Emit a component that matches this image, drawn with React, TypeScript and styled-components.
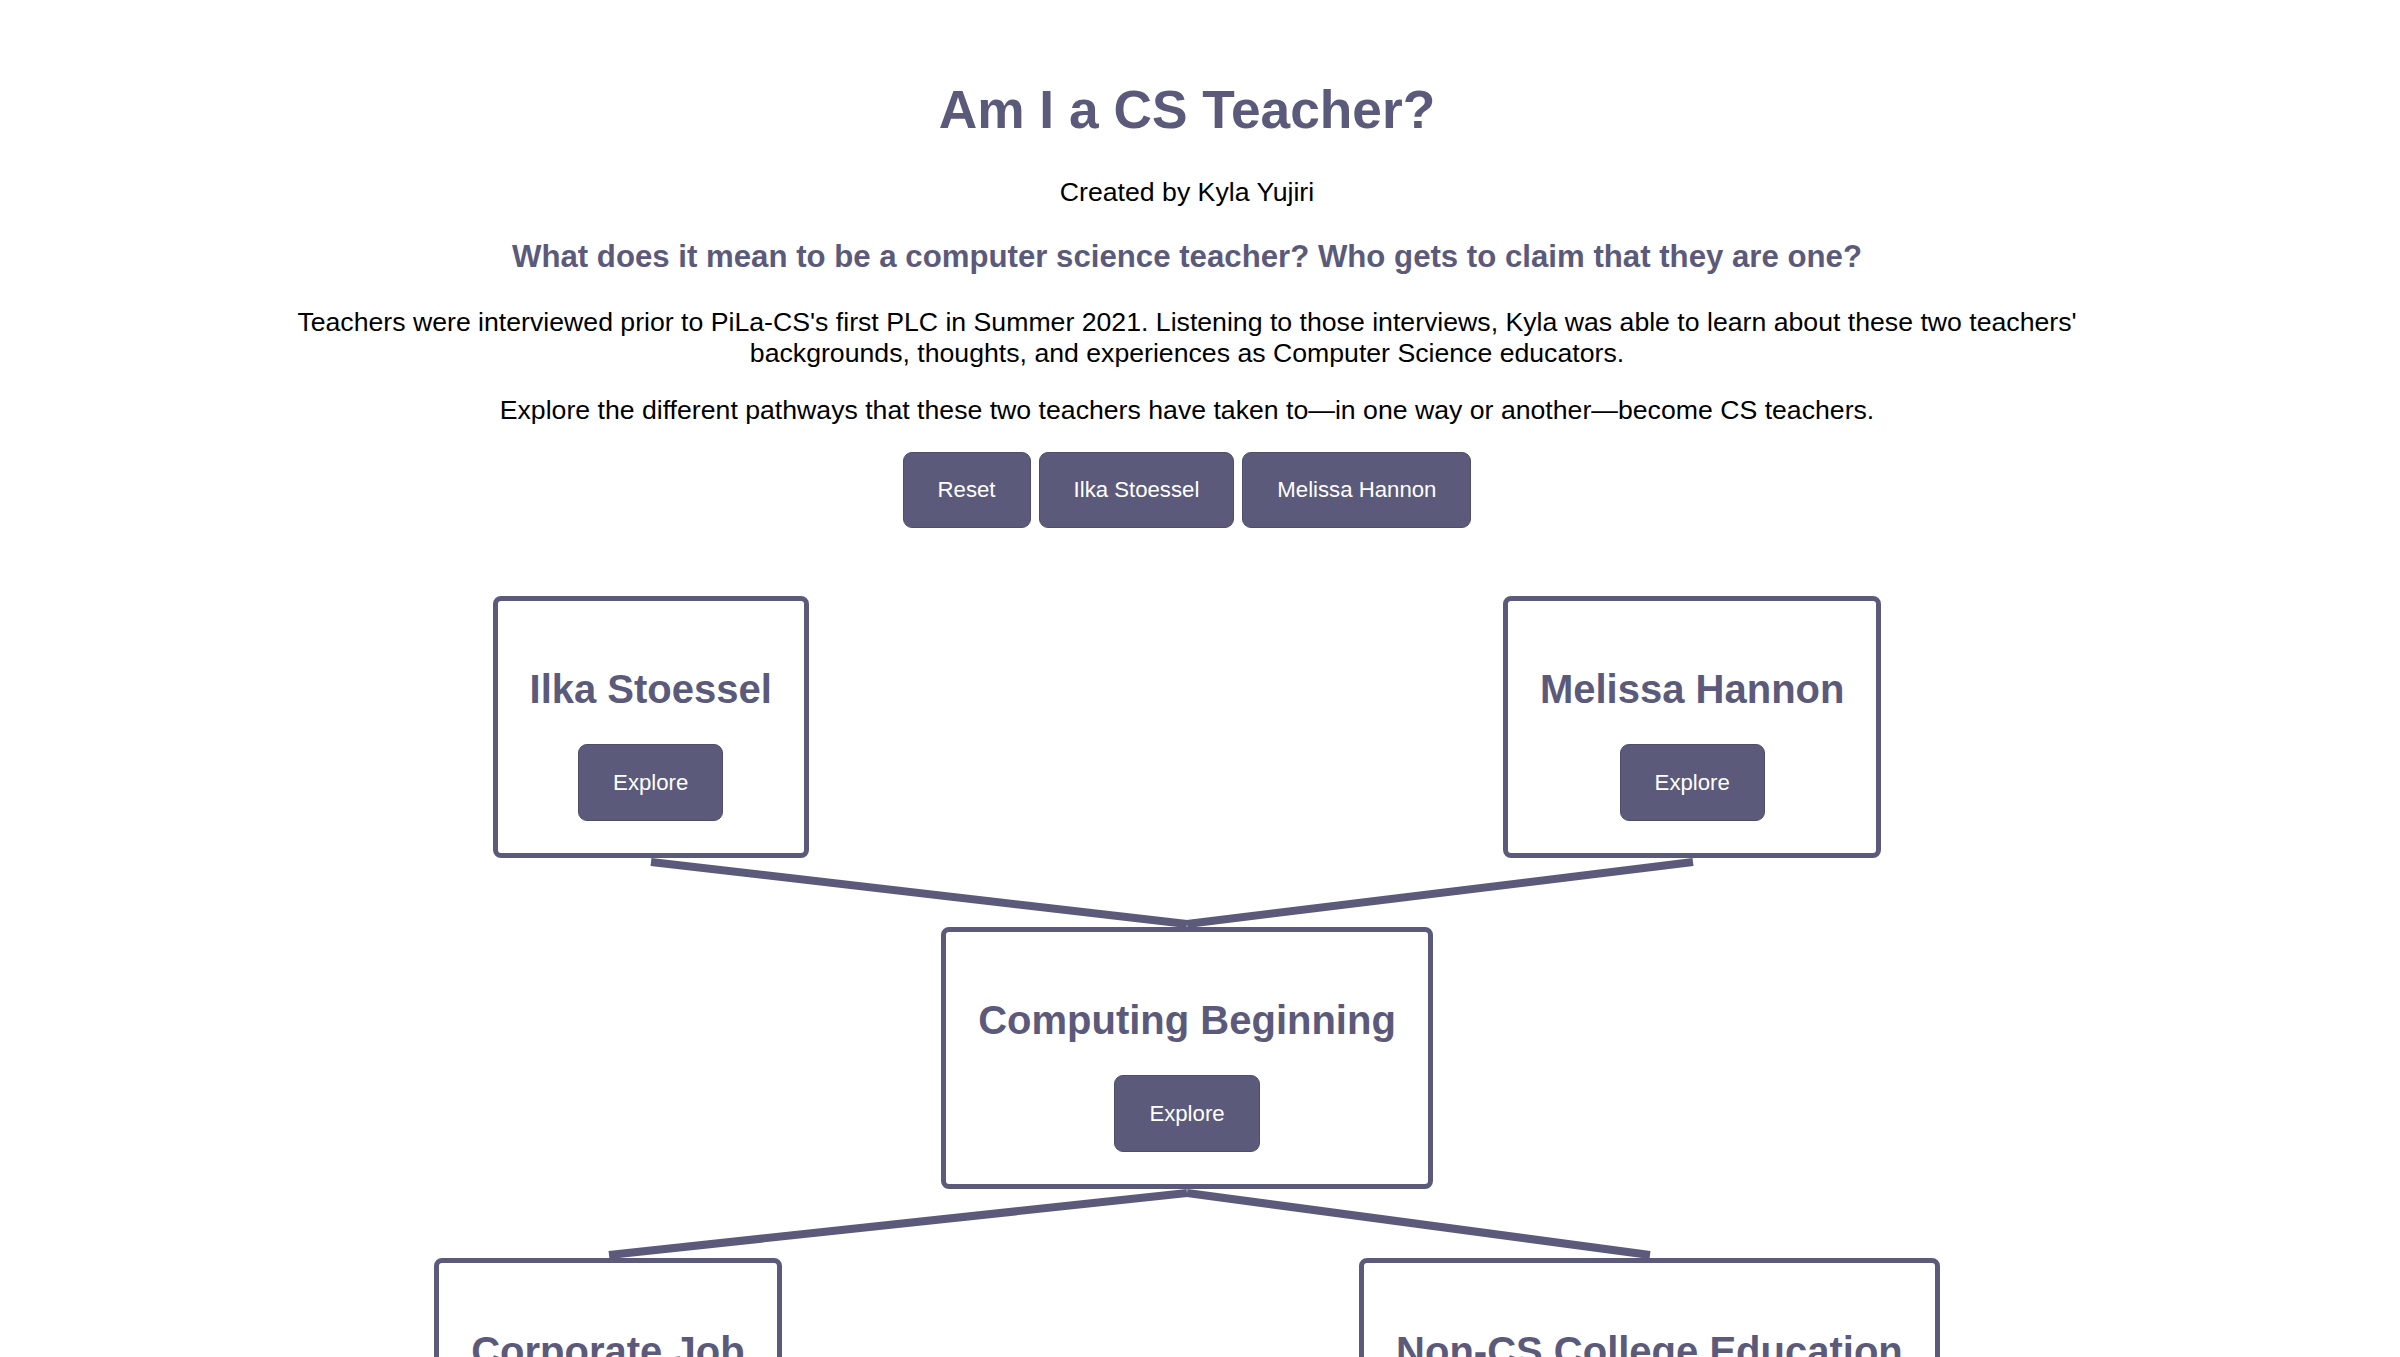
import React from 'react';
import styled, { createGlobalStyle } from 'styled-components';

const purple = '#5c5a7a';

const GlobalStyle = createGlobalStyle`
  body {
    margin: 0;
    background: #fff;
    font-family: 'Liberation Sans', Arial, Helvetica, sans-serif;
    color: #000;
  }
`;

const Page = styled.div`
  width: 2374px;
  padding-bottom: 80px;
`;

const Header = styled.header`
  display: flex;
  flex-direction: column;
  align-items: center;
  text-align: center;
`;

const Title = styled.h1`
  margin: 79px 0 0;
  font-size: 53.3px;
  line-height: 62px;
  font-weight: 700;
  color: ${purple};
`;

const Byline = styled.p`
  margin: 36px 0 0;
  font-size: 26.67px;
  line-height: 31px;
`;

const Question = styled.h3`
  margin: 31px 0 0;
  font-size: 31.2px;
  line-height: 36px;
  font-weight: 700;
  color: ${purple};
`;

const Blurb = styled.p<{ $gap: number }>`
  margin: ${p => p.$gap}px 0 0;
  font-size: 26.67px;
  line-height: 31px;
  max-width: 1800px;
`;

const ButtonBar = styled.div`
  display: flex;
  justify-content: center;
  gap: 8px;
  margin-top: 26px;
`;

const Button = styled.button<{ $h?: number }>`
  height: ${p => p.$h ?? 77}px;
  padding: 0 34px;
  border: 1px solid #4f4d6a;
  border-radius: 9px;
  background: ${purple};
  color: #fff;
  font-family: 'Liberation Sans', Arial, Helvetica, sans-serif;
  font-size: 22.2px;
  cursor: pointer;
`;

const Tree = styled.section`
  width: 2083px;
  margin: 68px auto 0;
`;

const Row = styled.div`
  display: flex;
  justify-content: space-around;
  align-items: flex-start;
`;

const Node = styled.div`
  display: flex;
  flex-direction: column;
  align-items: center;
  padding: 65px 32px 32px;
  border: 5px solid ${purple};
  border-radius: 8px;
  background: #fff;
`;

const NodeTitle = styled.h2`
  margin: 0 0 32px;
  font-size: 40px;
  line-height: 46px;
  font-weight: 700;
  color: ${purple};
  white-space: nowrap;
`;

const Link = styled.svg`
  display: block;
  width: 100%;
  height: 69px;
  overflow: visible;
`;

// x positions are relative to the tree (box centres)
const Connector = ({ lines }: { lines: [number, number][] }) => (
  <Link>
    {lines.map(([a, b], i) => (
      <line key={i} x1={a} y1={4} x2={b} y2={66} stroke={purple} strokeWidth={8} />
    ))}
  </Link>
);

const Card = ({ name }: { name: string }) => (
  <Node>
    <NodeTitle>{name}</NodeTitle>
    <Button>Explore</Button>
  </Node>
);

const App: React.FC = () => {
  return (
    <Page>
      <GlobalStyle />
      <Header>
        <Title>Am I a CS Teacher?</Title>
        <Byline>Created by Kyla Yujiri</Byline>
        <Question>What does it mean to be a computer science teacher? Who gets to claim that they are one?</Question>
        <Blurb $gap={32}>
          Teachers were interviewed prior to PiLa-CS's first PLC in Summer 2021. Listening to those interviews, Kyla was able to learn about these two teachers' backgrounds, thoughts, and experiences as Computer Science educators.
        </Blurb>
        <Blurb $gap={26}>
          Explore the different pathways that these two teachers have taken to—in one way or another—become CS teachers.
        </Blurb>
        <ButtonBar>
          <Button $h={76}>Reset</Button>
          <Button $h={76}>Ilka Stoessel</Button>
          <Button $h={76}>Melissa Hannon</Button>
        </ButtonBar>
      </Header>

      <Tree>
        <Row>
          <Card name="Ilka Stoessel" />
          <Card name="Melissa Hannon" />
        </Row>
        <Connector lines={[[505, 1041], [1547, 1041]]} />
        <Row>
          <Card name="Computing Beginning" />
        </Row>
        <Connector lines={[[1041, 463], [1041, 1504]]} />
        <Row>
          <Card name="Corporate Job" />
          <Card name="Non-CS College Education" />
        </Row>
      </Tree>
    </Page>
  );
};

export default App;
